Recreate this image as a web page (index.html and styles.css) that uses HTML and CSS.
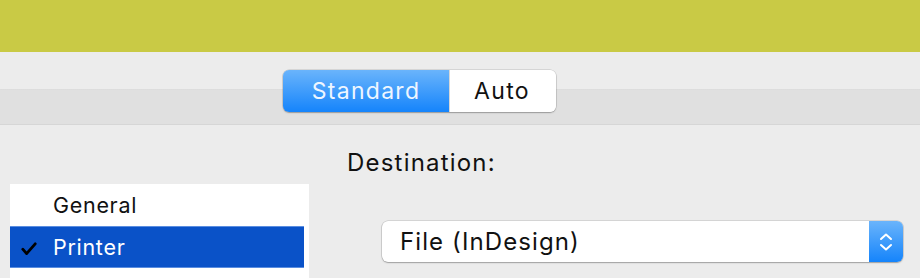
FILE: index.html
```html
<!DOCTYPE html>
<html>
<head>
<meta charset="utf-8">
<link rel="stylesheet" href="styles.css">
</head>
<body>
<div class="topbar"></div>
<div class="toolbar">
  <div class="segmented">
    <div class="seg seg-on">Standard</div>
    <div class="seg seg-off">Auto</div>
  </div>
</div>
<div class="main">
  <div class="sidebar">
    <div class="row">General</div>
    <div class="row row-sel"><svg class="check" width="16" height="14" viewBox="0 0 16 14"><path d="M1.8 7.2 L5.6 11.6 L14.2 1.8" fill="none" stroke="#000" stroke-width="2.8" stroke-linecap="round" stroke-linejoin="round"/></svg>Printer</div>
  </div>
  <div class="content">
    <div class="label">Destination:</div>
    <div class="popup">
      <span class="popup-text">File (InDesign)</span>
      <span class="popup-btn">
        <svg width="16" height="24" viewBox="0 0 16 24"><path d="M3 9 L8 4.5 L13 9" fill="none" stroke="#fff" stroke-width="2" stroke-linecap="round" stroke-linejoin="round"/><path d="M3 15 L8 19.5 L13 15" fill="none" stroke="#fff" stroke-width="2" stroke-linecap="round" stroke-linejoin="round"/></svg>
      </span>
    </div>
  </div>
</div>
</body>
</html>
```
FILE: styles.css
```css
html, body {
  margin: 0;
  padding: 0;
}
body {
  width: 920px;
  height: 278px;
  overflow: hidden;
  background: #ececec;
  font-family: "Inter", "Liberation Sans", sans-serif;
  color: #111;
}
.topbar {
  height: 52px;
  background: #c9ca45;
}
.toolbar {
  height: 73px;
  background: linear-gradient(to bottom, #ececec 0, #ececec 37px, #d9d9d9 37px, #e0e0e0 38px, #e0e0e0 72px, #d6d6d6 72px);
  padding-top: 18px;
  box-sizing: border-box;
}
.segmented {
  margin-left: 283px;
  width: 273px;
  height: 42px;
  display: flex;
  border-radius: 6px;
  box-shadow: 0 0 0 0.5px rgba(0,0,0,0.18), 0 1px 1.5px rgba(0,0,0,0.25);
  overflow: hidden;
}
.seg {
  display: flex;
  align-items: center;
  justify-content: center;
  font-size: 23px;
  letter-spacing: 1.3px;
}
.seg-on {
  width: 166px;
  background: linear-gradient(to bottom, #6ab4fb, #1584fb);
  color: #eef6ff;
}
.seg-off {
  flex: 1;
  background: #fff;
  color: #111;
  border-left: 1px solid #d8d8d8;
  padding-right: 2px;
}
.main {
  display: flex;
  padding-left: 10px;
}
.sidebar {
  width: 299px;
  margin-top: 59px;
  height: 100px;
  background: #fff;
}
.row {
  height: 42px;
  display: flex;
  align-items: center;
  padding-left: 43px;
  font-size: 21.5px;
  letter-spacing: 0.7px;
  position: relative;
  width: 294px;
  box-sizing: border-box;
}
.row-sel {
  background: #0a52c8;
  color: #fff;
  box-shadow: inset 0 1px 0 #5a8de0, inset 0 -1px 0 #5a8de0;
}
.check {
  position: absolute;
  left: 11px;
  top: 16px;
}
.content {
  margin-left: 38px;
  padding-top: 24px;
}
.label {
  font-size: 24px;
  letter-spacing: 1.2px;
  line-height: 28px;
  height: 28px;
}
.popup {
  margin-top: 44px;
  margin-left: 35px;
  width: 521px;
  height: 41px;
  background: #fff;
  border-radius: 6px;
  box-shadow: 0 0 0 0.5px rgba(0,0,0,0.2), 0 1px 1.5px rgba(0,0,0,0.25);
  display: flex;
  align-items: center;
  overflow: hidden;
}
.popup-text {
  flex: 1;
  padding-left: 18px;
  font-size: 24px;
  letter-spacing: 1.1px;
}
.popup-btn {
  width: 34px;
  height: 100%;
  background: linear-gradient(to bottom, #6ab4fb, #1584fb);
  display: flex;
  align-items: center;
  justify-content: center;
}
```
